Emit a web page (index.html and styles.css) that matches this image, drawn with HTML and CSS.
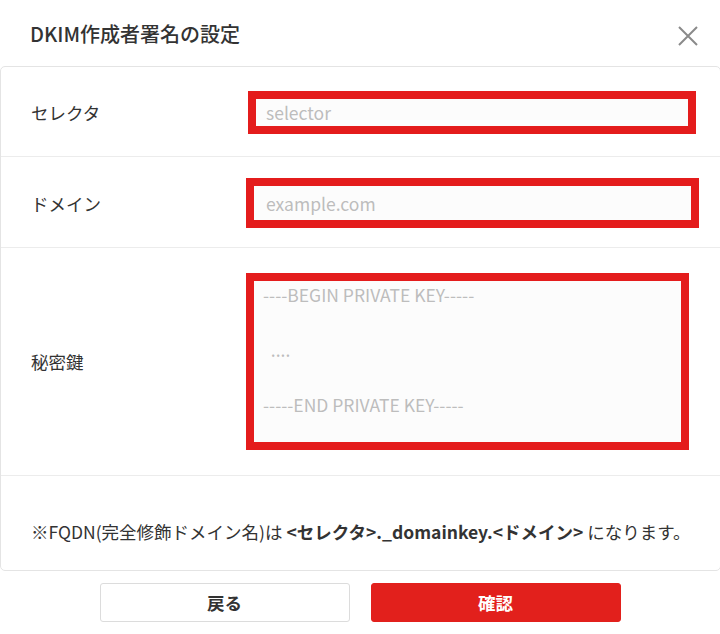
FILE: index.html
```html
<!DOCTYPE html>
<html lang="ja">
<head>
  <meta charset="UTF-8" />
  <meta name="viewport" content="width=device-width, initial-scale=1.0"/>
  <link rel="stylesheet" href="styles.css">
</head>
<body>

  <div class="modal">
    <div class="modal-header">
      <h1>DKIM作成者署名の設定</h1>
      <button class="close" type="button" aria-label="閉じる">
        <svg width="20" height="20" viewBox="0 0 20 20">
          <path d="M1 1 L19 19 M19 1 L1 19" stroke="#8a8a8a" stroke-width="2" fill="none"/>
        </svg>
      </button>
    </div>

    <div class="modal-body">
      <div class="row row-selector">
        <label class="label" for="selector">セレクタ</label>
        <input class="field field-selector" id="selector" type="text" placeholder="selector">
      </div>

      <div class="row row-domain">
        <label class="label" for="domain">ドメイン</label>
        <input class="field field-domain" id="domain" type="text" placeholder="example.com">
      </div>

      <div class="row row-key">
        <label class="label" for="key">秘密鍵</label>
        <textarea class="field field-key" id="key" placeholder="----BEGIN PRIVATE KEY-----&#10;&#10;  ....&#10;&#10;-----END PRIVATE KEY-----"></textarea>
      </div>

      <div class="row row-note">
        <p>※FQDN(完全修飾ドメイン名)は <b>&lt;セレクタ&gt;._domainkey.&lt;ドメイン&gt;</b> になります。</p>
      </div>
    </div>

    <div class="modal-footer">
      <button class="btn btn-back" type="button">戻る</button>
      <button class="btn btn-ok" type="button">確認</button>
    </div>
  </div>

</body>
</html>
```

FILE: styles.css
```css
* {
  margin: 0;
  padding: 0;
  box-sizing: border-box;
}

html, body {
  width: 100%;
  height: 100%;
  overflow: hidden;
  background: #fff;
  color: #333;
  font-family: "Noto Sans CJK JP", "Noto Sans", sans-serif;
  font-size: 17.5px;
}

.modal-header {
  height: 66px;
  display: flex;
  align-items: center;
  justify-content: space-between;
  padding: 0 22px 0 30px;
}

.modal-header h1 {
  font-size: 20px;
  font-weight: 500;
  color: #333;
}

.close {
  border: none;
  background: none;
  width: 20px;
  height: 20px;
  margin-top: 6px;
  cursor: pointer;
}

.modal-body {
  width: 721px;
  border: 1px solid #e4e4e4;
  border-radius: 5px;
}

.row {
  display: flex;
  align-items: center;
  padding-left: 30px;
  border-bottom: 1px solid #ececec;
}

.row:last-child {
  border-bottom: none;
}

.row-selector {
  padding-top: 24px;
  padding-bottom: 22px;
}

.row-domain {
  padding-top: 21px;
  padding-bottom: 19px;
}

.row-key {
  padding-top: 25px;
  padding-bottom: 25px;
}

.row-note {
  padding-top: 44px;
  padding-bottom: 26px;
}

.label {
  flex: 0 0 215px;
  font-size: 17.5px;
  color: #333;
}

.field {
  border: 8px solid #e41c1c;
  background: #fcfcfc;
  font-family: inherit;
  font-size: 17.5px;
  color: #333;
  outline: none;
}

.field::placeholder {
  color: #bdbdbd;
}

.field-selector {
  width: 448px;
  height: 43px;
  margin-left: 2px;
  padding: 0 10px;
}

.field-domain {
  width: 453px;
  height: 50px;
  padding: 0 12px;
}

.field-key {
  width: 443px;
  height: 177px;
  padding: 0 9px;
  line-height: 27.5px;
  resize: none;
}

.row-note p {
  font-size: 17.5px;
  line-height: 24px;
  color: #333;
}

.modal-footer {
  display: flex;
  justify-content: center;
  gap: 21px;
  padding-top: 12px;
}

.btn {
  width: 250px;
  height: 39px;
  border-radius: 3px;
  font-family: inherit;
  font-size: 17.5px;
  font-weight: 700;
  cursor: pointer;
}

.btn-back {
  background: #fff;
  border: 1px solid #dcdcdc;
  color: #333;
}

.btn-ok {
  background: #e2201c;
  border: 1px solid #e2201c;
  color: #fff;
}
```
